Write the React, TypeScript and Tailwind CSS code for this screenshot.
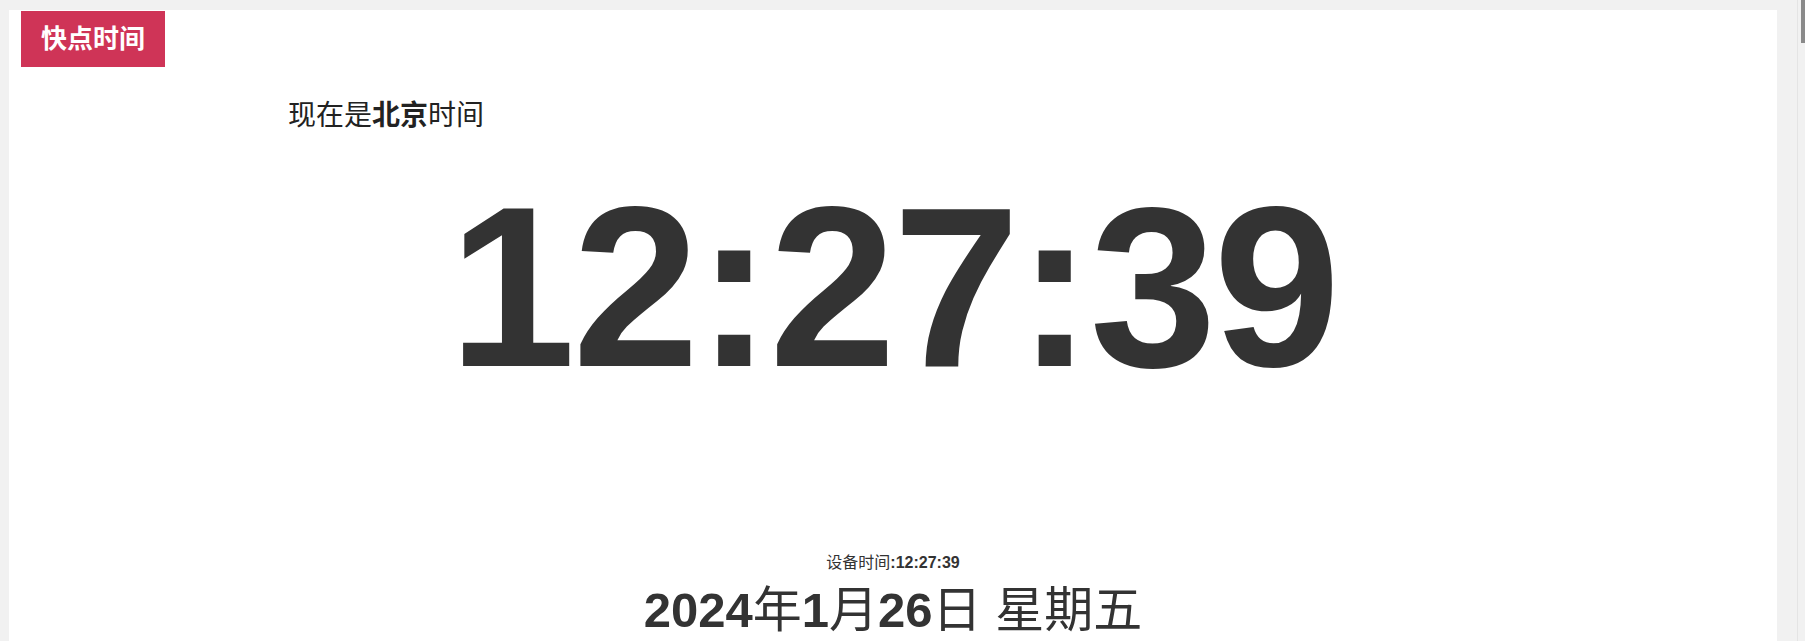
import React from 'react';

const latin = "font-['Liberation_Sans','Noto_Sans_CJK_SC',sans-serif]";

export default function App() {
  return (
    <div className={`flex h-[641px] w-full overflow-hidden bg-[#f1f1f1] ${latin}`}>
      {/* page area */}
      <div className="flex-1 pl-[9px] pt-[10px] pr-[20px]">
        <div className="h-full bg-white">
          {/* brand */}
          <div className="pl-3 pt-px">
            <div className="inline-flex h-[56px] items-center bg-[#cf3457] px-5 text-[26px] font-bold text-white">
              快点时间
            </div>
          </div>

          <div className="mx-auto max-w-[1210px]">
            {/* heading */}
            <div className="mt-[29px] text-[28px] leading-[40px] text-[#222]">
              现在是<span className="font-bold">北京</span>时间
            </div>

            {/* big clock */}
            <div className="mt-[37px] text-center text-[228px] font-bold leading-none tracking-[-3px] text-[#333]">
              12:27:39
            </div>

            {/* device time */}
            <div className="mt-[152px] text-center text-[16px] leading-[20px] text-[#333]">
              设备时间<span className="font-bold">:12:27:39</span>
            </div>

            {/* date */}
            <div className="mt-[9px] text-center text-[49px] leading-[56px] text-[#333]">
              <span className="font-bold">2024</span>年<span className="font-bold">1</span>月
              <span className="font-bold">26</span>日 星期五
            </div>
          </div>
        </div>
      </div>

      {/* scrollbar */}
      <div className="w-[8px] border-l border-[#e4e4e4] bg-[#f1f1f1] pl-[3px]">
        <div className="h-[43px] w-full bg-[#8a8a8a]" />
      </div>
    </div>
  );
}
